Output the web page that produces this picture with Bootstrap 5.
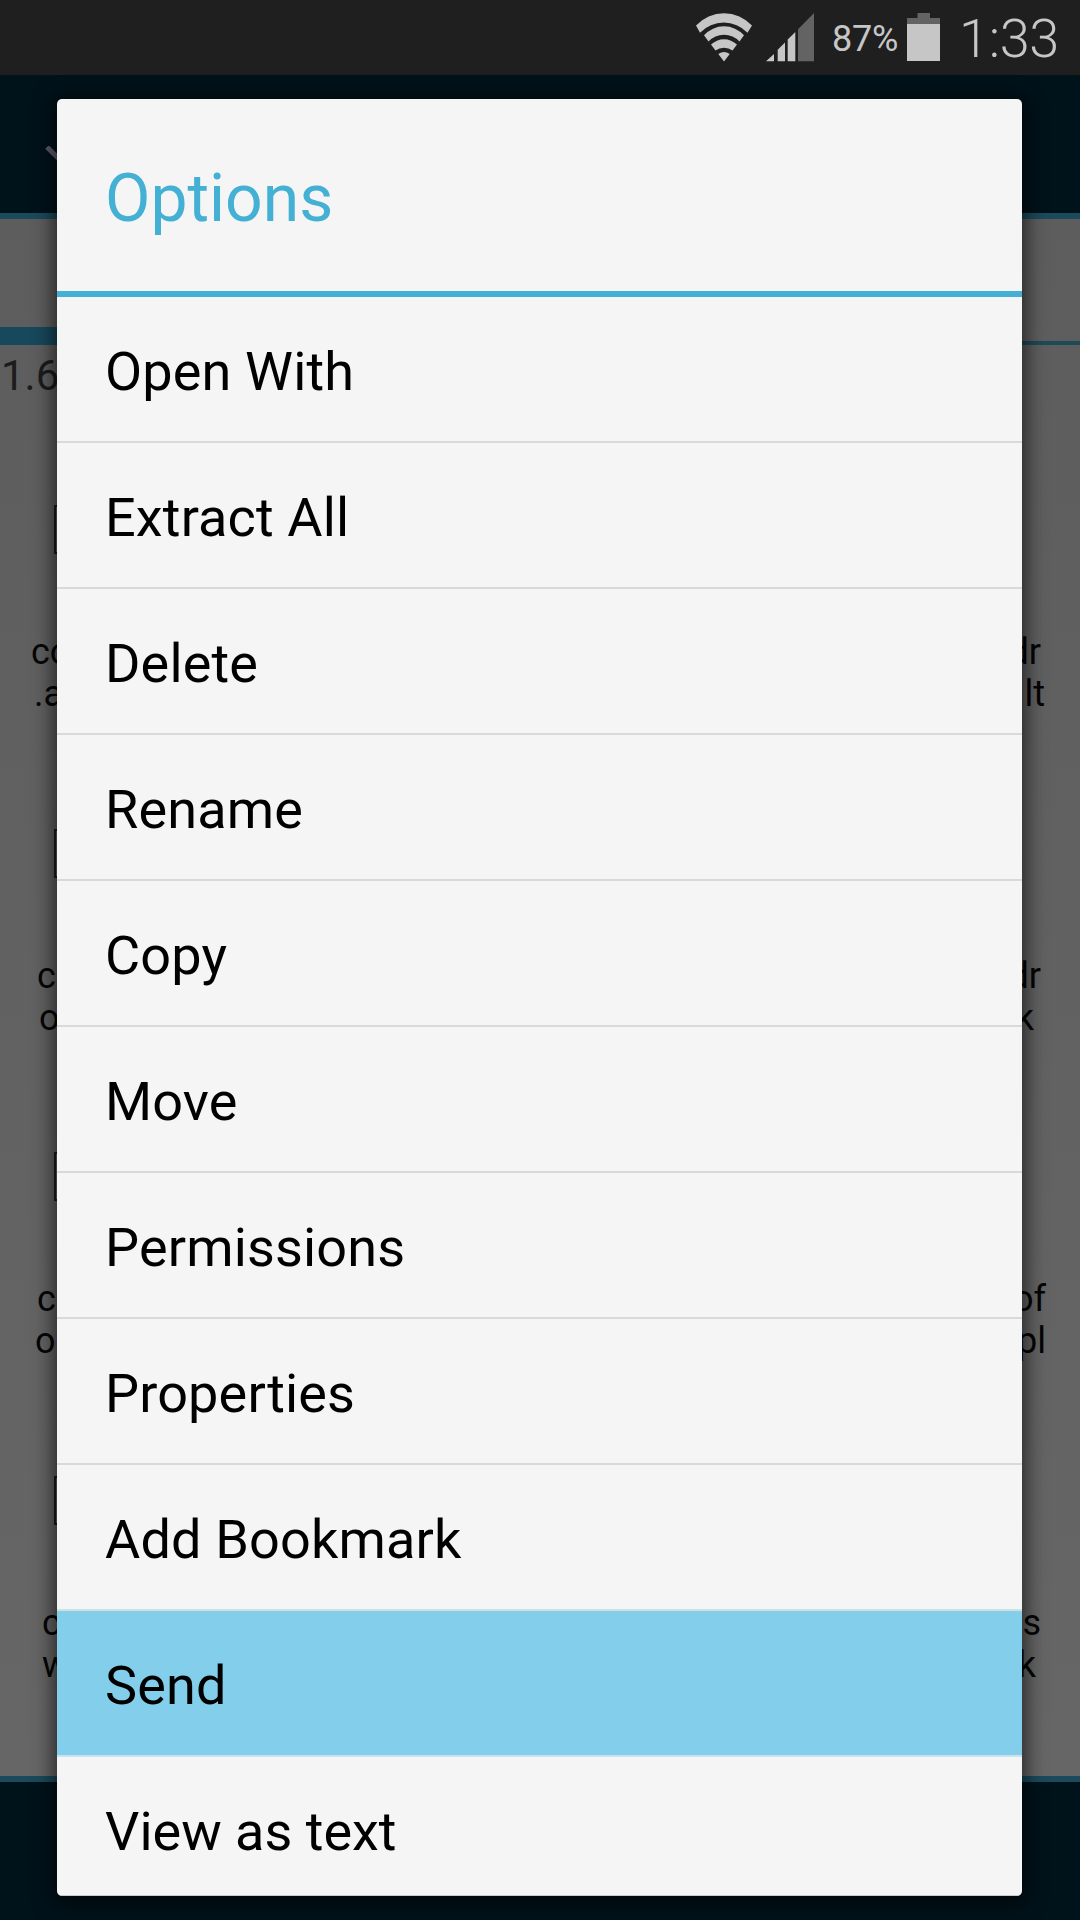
<!DOCTYPE html>
<html lang="en">
<head>
<meta charset="utf-8">
<meta name="viewport" content="width=device-width, initial-scale=1">
<title>Options</title>
<link href="https://cdn.jsdelivr.net/npm/bootstrap@5.3.0/dist/css/bootstrap.min.css" rel="stylesheet">
<style>
body{font-family:Roboto,"Noto Sans",sans-serif;background:#00121a}
.screen{width:1080px;height:1920px;background:#00121a}
.statusbar{height:75px;background:#1f1f1f;color:#c6c6c6;padding-left:696px;line-height:1}
.statusbar svg{display:block;flex:none}
.signal-icon{margin-left:14px}
.battery-icon{margin-left:2px}
.pct{font-size:36px;width:74px;margin:3px 0 0 17px;padding-left:1px;letter-spacing:-.2px}
.clock{font-size:54px;font-weight:300;margin:2px 0 0 19px;letter-spacing:-.3px}
.appbar{height:144px;border-bottom:6px solid #1b4a5c;padding:71px 0 0 44px}
.appbar svg{display:block}
.content-area{height:1557px;background:linear-gradient(#5d5d5d,#666);overflow:hidden}
.tabs-strip{height:126px}
.tab-on{width:360px;border-bottom:18px solid #17485c}
.tab-off{border-bottom:4px solid #1e4a57}
.path-line{height:85px;font-size:42px;line-height:50px;padding:6px 0 0 1px;color:#1c1c1c}
.file-row{height:323.6px;padding-top:75px;font-size:36px;line-height:42px;color:#050505}
.tick-box{width:48px;height:49px;border:2px solid #1c1c1c;margin:0 0 77px 54px}
.l31{padding-left:31px}.l34{padding-left:34px}.l35{padding-left:35px}.l37{padding-left:37px}.l39{padding-left:39px}.l42{padding-left:42px}
.r39{padding-right:39px}.r35{padding-right:35px}.r46{padding-right:46px}.r34{padding-right:34px}.r44{padding-right:44px}
.bottombar{height:144px;border-top:6px solid #1b4a5c}
.dialog-panel{left:57px;top:99px;width:965px;height:1797px;background:#f5f5f5;border-radius:5px;overflow:hidden;box-shadow:0 3px 20px 4px rgba(0,0,0,.62)}
.dialog-head{height:198px;border-bottom:6px solid #43b0d4;color:#43b0d4;font-size:66px;line-height:78px;padding:61px 48px 0}
.option-list{--bs-list-group-bg:transparent}
.option-list .list-group-item{height:146px;padding:3px 48px 0;border:0;border-bottom:2px solid #d9d9d9;font-size:54px;line-height:144px;letter-spacing:.16px;color:#000;background:transparent;border-radius:0}
.option-list .list-group-item.before-sel{border-bottom-color:#c5e4ea}
.option-list .list-group-item.sel{background:#83ceeb;border-bottom-color:#c5e4f0;box-shadow:inset 0 1px #9cc8d8}
.option-list .list-group-item:last-child{height:140px;border-bottom:2px solid #c8cccd;letter-spacing:0}
</style>
</head>
<body>
<div class="screen position-relative overflow-hidden d-flex flex-column">
  <div class="statusbar d-flex align-items-center flex-shrink-0">
    <svg width="56" height="49" viewBox="0 0 56 49" fill="#c6c6c6"><path d="M0 12.5A38 38 0 0 1 56 12.5L51.5 19.7A33 33 0 0 0 4 19.7ZM8 22.3A26.7 26.7 0 0 1 48 22.3L43.5 28.5A21 21 0 0 0 12.5 28.5ZM15 31.5A18.8 18.8 0 0 1 41 31.5L36.5 37.5A14.3 14.3 0 0 0 19.5 37.5ZM22.3 41A10 10 0 0 1 33.7 41L28 48.6Z"/></svg>
    <svg class="signal-icon" width="48" height="49" viewBox="0 0 48 49" fill="#c6c6c6"><path d="M0 48.3L8 41V48.3ZM11.7 36.7L19 29.4V48.3H11.7ZM21.7 26.6L29.3 19V48.3H21.7Z"/><path fill="#636363" d="M32 16.3L48 0V48.3H32Z"/></svg>
    <div class="pct">87%</div>
    <svg class="battery-icon" width="33" height="49" viewBox="0 0 33 49"><path fill="#636363" d="M10.5 0H23V5H33V11H0V5H10.5Z"/><path fill="#c6c6c6" d="M0 11H33V48H0Z"/></svg>
    <div class="clock">1:33</div>
  </div>
  <div class="appbar flex-shrink-0">
    <svg width="48" height="30" viewBox="0 0 48 30" fill="none" stroke="#5a5e6a" stroke-width="5"><path d="M3 1L23 21L43 1"/></svg>
  </div>
  <div class="content-area flex-shrink-0">
    <div class="tabs-strip d-flex"><div class="tab-on"></div><div class="tab-off flex-grow-1"></div></div>
    <div class="path-line">1.6</div>
    <div class="file-row"><div class="tick-box"></div>
      <div class="d-flex justify-content-between l31 r39"><span>co</span><span>dr</span></div>
      <div class="d-flex justify-content-between l34 r35"><span>.a</span><span>lt</span></div></div>
    <div class="file-row"><div class="tick-box"></div>
      <div class="d-flex justify-content-between l37 r39"><span>c</span><span>dr</span></div>
      <div class="d-flex justify-content-between l39 r46"><span>o</span><span>k</span></div></div>
    <div class="file-row"><div class="tick-box"></div>
      <div class="d-flex justify-content-between l37 r34"><span>c</span><span>of</span></div>
      <div class="d-flex justify-content-between l35 r34"><span>o</span><span>pl</span></div></div>
    <div class="file-row"><div class="tick-box"></div>
      <div class="d-flex justify-content-between l42 r39"><span>c</span><span>s</span></div>
      <div class="d-flex justify-content-between l42 r44"><span>w</span><span>k</span></div></div>
  </div>
  <div class="bottombar flex-shrink-0"></div>

  <div class="dialog-panel position-absolute">
    <div class="dialog-head">Options</div>
    <div class="list-group list-group-flush option-list">
      <div class="list-group-item">Open With</div>
      <div class="list-group-item">Extract All</div>
      <div class="list-group-item">Delete</div>
      <div class="list-group-item">Rename</div>
      <div class="list-group-item">Copy</div>
      <div class="list-group-item">Move</div>
      <div class="list-group-item">Permissions</div>
      <div class="list-group-item">Properties</div>
      <div class="list-group-item before-sel">Add Bookmark</div>
      <div class="list-group-item sel">Send</div>
      <div class="list-group-item">View as text</div>
    </div>
  </div>
</div>
<script src="https://cdn.jsdelivr.net/npm/bootstrap@5.3.0/dist/js/bootstrap.bundle.min.js"></script>
</body>
</html>
